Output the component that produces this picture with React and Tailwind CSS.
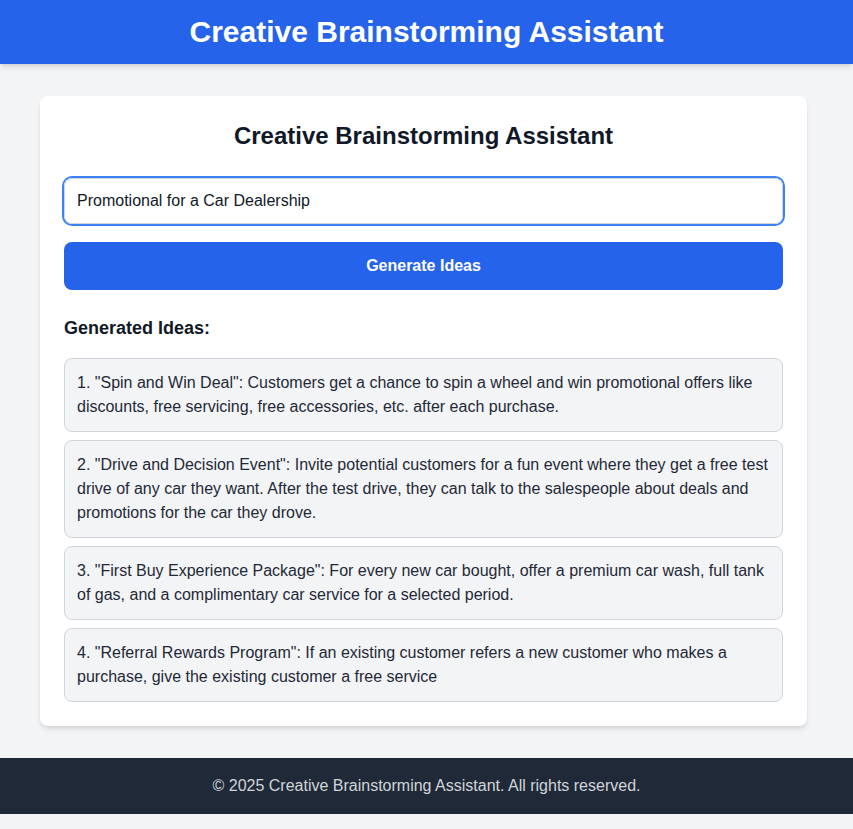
import { useState } from 'react';

const IDEAS = [
  '1. "Spin and Win Deal": Customers get a chance to spin a wheel and win promotional offers like discounts, free servicing, free accessories, etc. after each purchase.',
  '2. "Drive and Decision Event": Invite potential customers for a fun event where they get a free test drive of any car they want. After the test drive, they can talk to the salespeople about deals and promotions for the car they drove.',
  '3. "First Buy Experience Package": For every new car bought, offer a premium car wash, full tank of gas, and a complimentary car service for a selected period.',
  '4. "Referral Rewards Program": If an existing customer refers a new customer who makes a purchase, give the existing customer a free service',
];

export default function App() {
  const [prompt, setPrompt] = useState('Promotional for a Car Dealership');

  return (
    <div className="min-h-screen bg-[#f3f4f6] font-['Liberation_Sans',Arial,sans-serif]">
      {/* Header */}
      <header className="h-16 bg-[#2563eb] shadow-md flex items-center justify-center">
        <h1 className="text-3xl font-bold text-white">Creative Brainstorming Assistant</h1>
      </header>

      <main className="px-10 py-8">
        <div className="w-[767px] bg-white rounded-lg shadow-md p-6">
          <h2 className="text-2xl font-bold text-[#111827] text-center mb-6">
            Creative Brainstorming Assistant
          </h2>

          <div className="pt-0.5">
            <input
              type="text"
              value={prompt}
              onChange={(e) => setPrompt(e.target.value)}
              className="w-full px-3 py-2.5 text-base leading-6 text-[#111827] border border-[#d1d5db] rounded-lg outline-none ring-2 ring-[#3b82f6]"
            />
          </div>

          <button
            type="button"
            className="w-full mt-[18px] py-3 bg-[#2563eb] hover:bg-[#1d4ed8] text-white font-semibold rounded-lg"
          >
            Generate Ideas
          </button>

          <h3 className="mt-6 mb-4 text-lg font-semibold text-[#111827]">Generated Ideas:</h3>

          <div className="flex flex-col gap-2">
            {IDEAS.map((idea, i) => (
              <div key={i} className="px-3 py-3 bg-[#f3f4f6] border border-[#d1d5db] rounded-lg text-[#1f2937] leading-6">
                {idea}
              </div>
            ))}
          </div>
        </div>
      </main>

      {/* Footer */}
      <footer className="bg-[#1f2937] py-4 text-center text-[#d1d5db]">
        © 2025 Creative Brainstorming Assistant. All rights reserved.
      </footer>
    </div>
  );
}
